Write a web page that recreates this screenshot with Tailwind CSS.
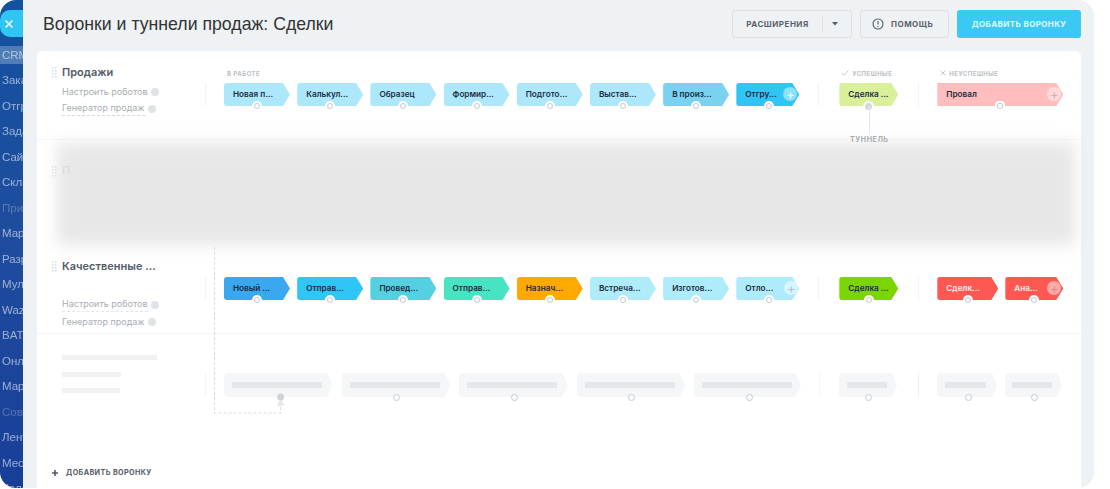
<!DOCTYPE html>
<html lang="ru">
<head>
    <meta charset="UTF-8">
    <title>Воронки и туннели продаж: Сделки</title>
    <script src="https://cdn.jsdelivr.net/npm/@tailwindcss/browser@4"></script>
</head>
<body class="bg-white">
    <div class="flex w-[1094px] h-[488px] rounded-[16px] overflow-hidden font-[Inter,sans-serif] blur-[0.5px]">

        <!-- Sidebar, cut off by the slider -->
        <div class="w-[23px] shrink-0 overflow-hidden bg-gradient-to-b from-[#12529f] via-[#1f4c9e] to-[#183f98] pt-[10px] font-['Liberation_Sans',sans-serif] text-[11.5px] leading-[25.5px] whitespace-nowrap text-white/55">
            <div class="h-[27px] rounded-l-[10px] bg-[#2fc6f6] flex items-center pl-[4px] mb-[9px]">
                <svg width="10" height="10" viewBox="0 0 10 10" fill="none" stroke="#ffffff" stroke-width="1.4"><path d="M1.5 1.5l7 7M8.500 1.500l-7 7"/></svg>
            </div>
            <div class="bg-white/25 pl-[2px] h-[18px] leading-[18px] mb-[4px]">CRM</div>
            <div class="pl-[2px]">Заказы</div>
            <div class="pl-[2px]">Отгрузки</div>
            <div class="pl-[2px]">Задачи</div>
            <div class="pl-[2px]">Сайты</div>
            <div class="pl-[2px]">Склад</div>
            <div class="pl-[2px] text-white/25">Приложения</div>
            <div class="pl-[2px]">Маркет</div>
            <div class="pl-[2px]">Разработчикам</div>
            <div class="pl-[2px]">Мультиполе</div>
            <div class="pl-[2px]">Wazzup</div>
            <div class="pl-[2px]">BATCH</div>
            <div class="pl-[2px]">Онлайн</div>
            <div class="pl-[2px]">Маркет</div>
            <div class="pl-[2px] text-white/25">Совместная</div>
            <div class="pl-[2px]">Лента</div>
            <div class="pl-[2px]">Месседжер</div>
            <div class="pl-[2px]">Календарь</div>
        </div>

        <!-- Slider -->
        <div class="flex-1 bg-[#eef2f4] pl-[14px] pr-[13px]">
            <div class="flex items-start h-[51px] pt-[10px]">
                <h1 class="ml-[6px] font-['Liberation_Sans',sans-serif] text-[17.7px] leading-[28px] text-[#333333]">Воронки и туннели продаж: Сделки</h1>
                <div class="ml-auto flex gap-[8px]">
                    <div class="flex items-center w-[120px] h-[28px] rounded-[3px] border border-[#dde1e4] text-[8px] font-bold tracking-[0.5px] text-[#59626e]">
                        <span class="w-[89px] text-center">РАСШИРЕНИЯ</span>
                        <span class="w-px h-[14px] bg-[#dfe3e6]"></span>
                        <svg class="ml-[9px]" width="6" height="4" viewBox="0 0 6 4" fill="#535c69"><path d="M0 0h6L3 3.500z"/></svg>
                    </div>
                    <div class="flex items-center w-[89px] h-[28px] rounded-[3px] border border-[#dde1e4] text-[8px] font-bold tracking-[0.5px] text-[#59626e] pl-[11px]">
                        <svg width="12" height="12" viewBox="0 0 12 12" fill="none" stroke="#535c69" stroke-width="1.100"><circle cx="6" cy="6" r="5"/><path d="M6 3v3.600M6 8v1"/></svg>
                        <span class="ml-[7px]">ПОМОЩЬ</span>
                    </div>
                    <div class="flex items-center justify-center w-[124px] h-[28px] rounded-[3px] bg-[#3bc8f5] text-[8px] font-bold tracking-[0.4px] text-white/85">ДОБАВИТЬ ВОРОНКУ</div>
                </div>
            </div>

            <!-- Card -->
            <div class="relative flex flex-col h-[437px] rounded-t-[5px] bg-white">

                <!-- Продажи -->
                <div class="flex h-[88px]">
                    <div class="w-[168px] pl-[15px] pt-[14px]">
                        <div class="flex items-center gap-[5px] h-[14px]">
                            <svg width="5" height="11" viewBox="0 0 5 11" fill="#d3d7da"><path d="M0 0h1.500v1.500H0zM3 0h1.500v1.500H3zM0 3h1.500v1.500H0zM3 3h1.500v1.500H3zM0 6h1.500v1.500H0zM3 6h1.500v1.500H3zM0 9h1.500v1.500H0zM3 9h1.500v1.500H3z"/></svg>
                            <span class="text-[11px] font-semibold text-[#535c69]">Продажи</span>
                        </div>
                        <div class="ml-[10px] mt-[4px] flex items-center h-[17px] text-[9px] text-[#a8adb4]">
                            <span>Настроить роботов</span><span class="ml-[3px] size-[8px] rounded-full bg-[#dfe3e6]"></span>
                        </div>
                        <div class="ml-[10px] flex items-center h-[17px] text-[9px] text-[#a8adb4]">
                            <span class="border-b border-dashed border-[#d5dade]">Генератор продаж</span><span class="ml-[3px] size-[8px] rounded-full bg-[#dfe3e6]"></span>
                        </div>
                    </div>
                    <div class="pt-[18px]">
                        <div class="flex h-[8px] items-center text-[6px] font-bold tracking-[0.5px] text-[#b9bec3]">
                            <span class="ml-[22px]">В РАБОТЕ</span>
                            <span class="ml-[581px] flex items-center gap-[3px]">
                                <svg width="8" height="6" viewBox="0 0 8 6" fill="none" stroke="#c4c9cd"><path d="M.5 3l2.300 2.300L7.500.5"/></svg>УСПЕШНЫЕ
                            </span>
                            <span class="ml-[48px] flex items-center gap-[3px]">
                                <svg width="6" height="6" viewBox="0 0 6 6" fill="none" stroke="#c4c9cd"><path d="M.5.5l5 5M5.500.5l-5 5"/></svg>НЕУСПЕШНЫЕ
                            </span>
                        </div>
                        <div class="flex items-center mt-[6px] text-[8.2px] font-semibold text-[#1b2b3f]">
                            <div class="w-px h-[23px] bg-[#f1f3f4] mr-[18px]"></div>
                            <div class="flex gap-[7.2px]">
                                <div class="relative w-[66px] h-[23px]">
                                    <div class="flex items-center h-full pl-[9px] rounded-l-[3px] bg-[#ade7fb] [clip-path:polygon(0_0,59px_0,100%_50%,59px_100%,0_100%)]">Новая п...</div>
                                    <span class="absolute left-[30px] bottom-[-3px] size-[6px] rounded-full bg-white border border-[#c3cad0] ring-2 ring-white"></span>
                                </div>
                                <div class="relative w-[66px] h-[23px]">
                                    <div class="flex items-center h-full pl-[9px] rounded-l-[3px] bg-[#ade7fb] [clip-path:polygon(0_0,59px_0,100%_50%,59px_100%,0_100%)]">Калькул...</div>
                                    <span class="absolute left-[30px] bottom-[-3px] size-[6px] rounded-full bg-white border border-[#c3cad0] ring-2 ring-white"></span>
                                </div>
                                <div class="relative w-[66px] h-[23px]">
                                    <div class="flex items-center h-full pl-[9px] rounded-l-[3px] bg-[#ade7fb] [clip-path:polygon(0_0,59px_0,100%_50%,59px_100%,0_100%)]">Образец</div>
                                    <span class="absolute left-[30px] bottom-[-3px] size-[6px] rounded-full bg-white border border-[#c3cad0] ring-2 ring-white"></span>
                                </div>
                                <div class="relative w-[66px] h-[23px]">
                                    <div class="flex items-center h-full pl-[9px] rounded-l-[3px] bg-[#ade7fb] [clip-path:polygon(0_0,59px_0,100%_50%,59px_100%,0_100%)]">Формир...</div>
                                    <span class="absolute left-[30px] bottom-[-3px] size-[6px] rounded-full bg-white border border-[#c3cad0] ring-2 ring-white"></span>
                                </div>
                                <div class="relative w-[66px] h-[23px]">
                                    <div class="flex items-center h-full pl-[9px] rounded-l-[3px] bg-[#ade7fb] [clip-path:polygon(0_0,59px_0,100%_50%,59px_100%,0_100%)]">Подгото...</div>
                                    <span class="absolute left-[30px] bottom-[-3px] size-[6px] rounded-full bg-white border border-[#c3cad0] ring-2 ring-white"></span>
                                </div>
                                <div class="relative w-[66px] h-[23px]">
                                    <div class="flex items-center h-full pl-[9px] rounded-l-[3px] bg-[#ade7fb] [clip-path:polygon(0_0,59px_0,100%_50%,59px_100%,0_100%)]">Выстав...</div>
                                    <span class="absolute left-[30px] bottom-[-3px] size-[6px] rounded-full bg-white border border-[#c3cad0] ring-2 ring-white"></span>
                                </div>
                                <div class="relative w-[66px] h-[23px]">
                                    <div class="flex items-center h-full pl-[9px] rounded-l-[3px] bg-[#78d2f0] [clip-path:polygon(0_0,59px_0,100%_50%,59px_100%,0_100%)]">В произ...</div>
                                    <span class="absolute left-[30px] bottom-[-3px] size-[6px] rounded-full bg-white border border-[#c3cad0] ring-2 ring-white"></span>
                                </div>
                                <div class="relative w-[63px] h-[23px]">
                                    <div class="flex items-center h-full pl-[9px] rounded-l-[3px] bg-[#2fc6f6] [clip-path:polygon(0_0,56px_0,100%_50%,56px_100%,0_100%)]">Отгру...</div>
                                    <span class="absolute left-[30px] bottom-[-3px] size-[6px] rounded-full bg-white border border-[#c3cad0] ring-2 ring-white"></span>
                                    <span class="absolute right-[2px] top-[4px] flex items-center justify-center size-[14px] rounded-full bg-white/45 text-white text-[13px] font-normal leading-none">+</span>
                                </div>
                            </div>
                            <div class="w-px h-[23px] bg-[#f1f3f4] ml-[19px] mr-[20px]"></div>
                            <div class="relative w-[59px] h-[23px]">
                                <div class="flex items-center h-full pl-[9px] rounded-l-[3px] bg-[#d9ef9a] [clip-path:polygon(0_0,52px_0,100%_50%,52px_100%,0_100%)]">Сделка ...</div>
                                <span class="absolute left-[26px] bottom-[-4px] size-[7px] rounded-full bg-[#d3d8dc] ring-2 ring-white"></span>
                            </div>
                            <div class="w-px h-[23px] bg-[#f1f3f4] ml-[20px] mr-[18px]"></div>
                            <div class="relative w-[126px] h-[23px]">
                                <div class="flex items-center h-full pl-[9px] bg-[#ffbdbd] [clip-path:polygon(0_0,119px_0,100%_50%,119px_100%,0_100%)]">Провал</div>
                                <span class="absolute left-[60px] bottom-[-3px] size-[6px] rounded-[2px] bg-white border border-[#c3cad0] ring-2 ring-white"></span>
                                <span class="absolute right-[2px] top-[4px] flex items-center justify-center size-[14px] rounded-full bg-white/45 text-[#d8a8a8] text-[13px] font-normal leading-none">+</span>
                            </div>
                        </div>
                    </div>
                </div>

                <!-- Blurred funnel -->
                <div class="relative h-[113px] border-t border-[#f5f6f7]">
                    <div class="ml-[20px] mr-[6px] mt-[3px] h-[102px] bg-[#e7e7e7] blur-[8px]"></div>
                    <svg class="absolute left-[15px] top-[26px]" width="5" height="11" viewBox="0 0 5 11" fill="#dcdfe1"><path d="M0 0h1.500v1.500H0zM3 0h1.500v1.500H3zM0 3h1.500v1.500H0zM3 3h1.500v1.500H3zM0 6h1.500v1.500H0zM3 6h1.500v1.500H3zM0 9h1.500v1.500H0zM3 9h1.500v1.500H3z"/></svg>
                    <span class="absolute left-[25px] top-[22px] text-[11px] font-semibold text-[#dcdcdc]">П</span>
                </div>

                <!-- Качественные -->
                <div class="flex h-[82px] border-b border-[#f3f4f5]">
                    <div class="w-[168px] pl-[15px] pt-[7px]">
                        <div class="flex items-center gap-[5px] h-[14px]">
                            <svg width="5" height="11" viewBox="0 0 5 11" fill="#d3d7da"><path d="M0 0h1.500v1.500H0zM3 0h1.500v1.500H3zM0 3h1.500v1.500H0zM3 3h1.500v1.500H3zM0 6h1.500v1.500H0zM3 6h1.500v1.500H3zM0 9h1.500v1.500H0zM3 9h1.500v1.500H3z"/></svg>
                            <span class="text-[11px] font-semibold text-[#535c69]">Качественные ...</span>
                        </div>
                        <div class="ml-[10px] mt-[23px] flex items-center h-[17px] text-[9px] text-[#a8adb4]">
                            <span class="border-b border-dashed border-[#e3e6e8]">Настроить роботов</span><span class="ml-[3px] size-[8px] rounded-full bg-[#dfe3e6]"></span>
                        </div>
                        <div class="ml-[10px] flex items-center h-[17px] text-[9px] text-[#a8adb4]">
                            <span>Генератор продаж</span><span class="ml-[3px] size-[8px] rounded-full bg-[#dfe3e6]"></span>
                        </div>
                    </div>
                    <div class="flex items-start pt-[25px] text-[8.2px] font-semibold text-[#1b2b3f]">
                        <div class="w-px h-[23px] bg-[#f1f3f4] mr-[18px]"></div>
                        <div class="flex gap-[7.2px]">
                            <div class="relative w-[66px] h-[23px]">
                                <div class="flex items-center h-full pl-[9px] rounded-l-[3px] bg-[#39a8ef] [clip-path:polygon(0_0,59px_0,100%_50%,59px_100%,0_100%)]">Новый ...</div>
                                <span class="absolute left-[30px] bottom-[-3px] size-[6px] rounded-full bg-white border border-[#c3cad0] ring-2 ring-white"></span>
                            </div>
                            <div class="relative w-[66px] h-[23px]">
                                <div class="flex items-center h-full pl-[9px] rounded-l-[3px] bg-[#2fc6f6] [clip-path:polygon(0_0,59px_0,100%_50%,59px_100%,0_100%)]">Отправ...</div>
                                <span class="absolute left-[30px] bottom-[-3px] size-[6px] rounded-full bg-white border border-[#c3cad0] ring-2 ring-white"></span>
                            </div>
                            <div class="relative w-[66px] h-[23px]">
                                <div class="flex items-center h-full pl-[9px] rounded-l-[3px] bg-[#55d0e0] [clip-path:polygon(0_0,59px_0,100%_50%,59px_100%,0_100%)]">Провед...</div>
                                <span class="absolute left-[30px] bottom-[-3px] size-[6px] rounded-full bg-white border border-[#c3cad0] ring-2 ring-white"></span>
                            </div>
                            <div class="relative w-[66px] h-[23px]">
                                <div class="flex items-center h-full pl-[9px] rounded-l-[3px] bg-[#47e4c2] [clip-path:polygon(0_0,59px_0,100%_50%,59px_100%,0_100%)]">Отправ...</div>
                                <span class="absolute left-[30px] bottom-[-3px] size-[6px] rounded-full bg-white border border-[#c3cad0] ring-2 ring-white"></span>
                            </div>
                            <div class="relative w-[66px] h-[23px]">
                                <div class="flex items-center h-full pl-[9px] rounded-l-[3px] bg-[#ffa900] [clip-path:polygon(0_0,59px_0,100%_50%,59px_100%,0_100%)]">Назнач...</div>
                                <span class="absolute left-[30px] bottom-[-3px] size-[6px] rounded-full bg-white border border-[#c3cad0] ring-2 ring-white"></span>
                            </div>
                            <div class="relative w-[66px] h-[23px]">
                                <div class="flex items-center h-full pl-[9px] rounded-l-[3px] bg-[#aeebfb] [clip-path:polygon(0_0,59px_0,100%_50%,59px_100%,0_100%)]">Встреча...</div>
                                <span class="absolute left-[30px] bottom-[-3px] size-[6px] rounded-full bg-white border border-[#c3cad0] ring-2 ring-white"></span>
                            </div>
                            <div class="relative w-[66px] h-[23px]">
                                <div class="flex items-center h-full pl-[9px] rounded-l-[3px] bg-[#aeebfb] [clip-path:polygon(0_0,59px_0,100%_50%,59px_100%,0_100%)]">Изготов...</div>
                                <span class="absolute left-[30px] bottom-[-3px] size-[6px] rounded-full bg-white border border-[#c3cad0] ring-2 ring-white"></span>
                            </div>
                            <div class="relative w-[63px] h-[23px]">
                                <div class="flex items-center h-full pl-[9px] rounded-l-[3px] bg-[#aeebfb] [clip-path:polygon(0_0,56px_0,100%_50%,56px_100%,0_100%)]">Отло...</div>
                                <span class="absolute left-[30px] bottom-[-3px] size-[6px] rounded-full bg-white border border-[#c3cad0] ring-2 ring-white"></span>
                                <span class="absolute right-[1px] top-[4px] flex items-center justify-center size-[14px] rounded-full bg-white/50 text-[#b5c2cc] text-[13px] font-normal leading-none">+</span>
                            </div>
                        </div>
                        <div class="w-px h-[23px] bg-[#f1f3f4] ml-[19px] mr-[20px]"></div>
                        <div class="relative w-[59px] h-[23px]">
                            <div class="flex items-center h-full pl-[9px] rounded-l-[3px] bg-[#7bd500] [clip-path:polygon(0_0,52px_0,100%_50%,52px_100%,0_100%)]">Сделка ...</div>
                            <span class="absolute left-[27px] bottom-[-3px] size-[6px] rounded-full bg-white border border-[#c3cad0] ring-2 ring-white"></span>
                        </div>
                        <div class="w-px h-[23px] bg-[#f1f3f4] ml-[20px] mr-[18px]"></div>
                        <div class="relative w-[61px] h-[23px] text-white/90">
                            <div class="flex items-center h-full pl-[9px] rounded-l-[3px] bg-[#ff5752] [clip-path:polygon(0_0,54px_0,100%_50%,54px_100%,0_100%)]">Сделк...</div>
                            <span class="absolute left-[28px] bottom-[-3px] size-[6px] rounded-full bg-white border border-[#c3cad0] ring-2 ring-white"></span>
                        </div>
                        <div class="relative ml-[7px] w-[58px] h-[23px] text-white/90">
                            <div class="flex items-center h-full pl-[9px] rounded-l-[3px] bg-[#ff5752] [clip-path:polygon(0_0,51px_0,100%_50%,51px_100%,0_100%)]">Ана...</div>
                            <span class="absolute left-[26px] bottom-[-3px] size-[6px] rounded-full bg-white border border-[#c3cad0] ring-2 ring-white"></span>
                            <span class="absolute right-[2px] top-[4px] flex items-center justify-center size-[14px] rounded-full bg-white/50 text-[#d88] text-[13px] font-normal leading-none">+</span>
                        </div>
                    </div>
                </div>

                <!-- Loading funnel -->
                <div class="flex h-[80px]">
                    <div class="w-[168px] pl-[25px] pt-[21px]">
                        <div class="w-[95px] h-[5px] bg-[#eff1f2]"></div>
                        <div class="w-[59px] h-[5px] bg-[#eff1f2] mt-[12px]"></div>
                        <div class="w-[58px] h-[5px] bg-[#eff1f2] mt-[11px]"></div>
                    </div>
                    <div class="flex items-start pt-[39px]">
                        <div class="w-px h-[24px] bg-[#f3f4f5] mr-[18px]"></div>
                        <div class="flex gap-[8.5px]">
                            <div class="flex items-center w-[109px] h-[24px] pl-[8px] rounded-l-[4px] bg-[#f4f6f8] [clip-path:polygon(0_0,103px_0,100%_50%,103px_100%,0_100%)]"><div class="w-[90px] h-[6px] bg-[#e5e8ea]"></div></div>
                            <div class="flex items-center w-[109px] h-[24px] pl-[8px] rounded-l-[4px] bg-[#f4f6f8] [clip-path:polygon(0_0,103px_0,100%_50%,103px_100%,0_100%)]"><div class="w-[90px] h-[6px] bg-[#e5e8ea]"></div></div>
                            <div class="flex items-center w-[109px] h-[24px] pl-[8px] rounded-l-[4px] bg-[#f4f6f8] [clip-path:polygon(0_0,103px_0,100%_50%,103px_100%,0_100%)]"><div class="w-[90px] h-[6px] bg-[#e5e8ea]"></div></div>
                            <div class="flex items-center w-[109px] h-[24px] pl-[8px] rounded-l-[4px] bg-[#f4f6f8] [clip-path:polygon(0_0,103px_0,100%_50%,103px_100%,0_100%)]"><div class="w-[90px] h-[6px] bg-[#e5e8ea]"></div></div>
                            <div class="flex items-center w-[107px] h-[24px] pl-[8px] rounded-l-[4px] bg-[#f4f6f8] [clip-path:polygon(0_0,101px_0,100%_50%,101px_100%,0_100%)]"><div class="w-[90px] h-[6px] bg-[#e5e8ea]"></div></div>
                        </div>
                        <div class="w-px h-[24px] bg-[#f5f6f7] ml-[18px] mr-[19px]"></div>
                        <div class="flex items-center w-[58px] h-[24px] pl-[8px] rounded-l-[4px] bg-[#f4f6f8] [clip-path:polygon(0_0,53px_0,100%_50%,53px_100%,0_100%)]"><div class="w-[40px] h-[6px] bg-[#e5e8ea]"></div></div>
                        <div class="w-px h-[24px] bg-[#eceef0] ml-[21px] mr-[18px]"></div>
                        <div class="flex items-center w-[60px] h-[24px] pl-[8px] rounded-l-[4px] bg-[#f4f6f8] [clip-path:polygon(0_0,55px_0,100%_50%,55px_100%,0_100%)]"><div class="w-[41px] h-[6px] bg-[#e5e8ea]"></div></div>
                        <div class="flex items-center ml-[8px] w-[57px] h-[24px] pl-[7px] rounded-l-[4px] bg-[#f4f6f8] [clip-path:polygon(0_0,52px_0,100%_50%,52px_100%,0_100%)]"><div class="w-[40px] h-[6px] bg-[#e5e8ea]"></div></div>
                    </div>
                </div>

                <div class="mt-auto mb-[10px] ml-[15px] flex items-center gap-[8px] h-[10px] text-[7.2px] font-bold tracking-[0.4px] text-[#535c69]">
                    <svg width="6" height="6" viewBox="0 0 6 6" fill="#535c69"><path d="M2.200 0h1.600v2.200H6v1.600H3.800V6H2.200V3.800H0V2.200h2.200z"/></svg>
                    <span>ДОБАВИТЬ ВОРОНКУ</span>
                </div>

                <!-- Tunnel connectors over the rows -->
                <div class="absolute left-[832px] top-[55px] w-px h-[28px] bg-[#e6e8ea]"></div>
                <span class="absolute left-[813px] top-[84px] text-[7.2px] font-bold tracking-[0.5px] text-[#a9adb1]">ТУННЕЛЬ</span>
                <svg class="absolute left-[177px] top-[196px]" width="72" height="172" viewBox="0 0 72 172" fill="none">
                    <path d="M.5 0v166H66.500V152" stroke="#d9dcde" stroke-dasharray="3 2"/>
                    <path d="M66.500 151l-4 8h8z" fill="#e6e8ea"/>
                    <circle cx="66.500" cy="150" r="3.500" fill="#cfd3d6"/>
                </svg>
                <span class="absolute left-[356px] top-[343px] size-[7px] rounded-full bg-white border border-[#c3cad0]"></span>
                <span class="absolute left-[474px] top-[343px] size-[7px] rounded-full bg-white border border-[#c3cad0]"></span>
                <span class="absolute left-[591px] top-[343px] size-[7px] rounded-full bg-white border border-[#c3cad0]"></span>
                <span class="absolute left-[709px] top-[343px] size-[7px] rounded-full bg-white border border-[#c3cad0]"></span>
                <span class="absolute left-[828px] top-[343px] size-[7px] rounded-full bg-white border border-[#c3cad0]"></span>
                <span class="absolute left-[928px] top-[343px] size-[7px] rounded-full bg-white border border-[#c3cad0]"></span>
                <span class="absolute left-[994px] top-[343px] size-[7px] rounded-full bg-white border border-[#c3cad0]"></span>
            </div>
        </div>
    </div>
</body>
</html>
